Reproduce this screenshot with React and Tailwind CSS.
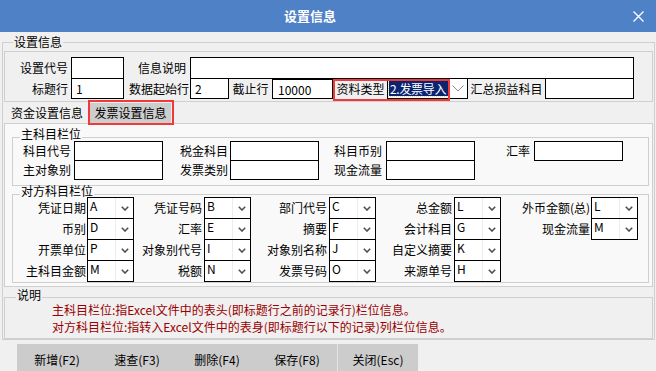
import React from "react";

const font = "font-['Noto_Sans_CJK_SC','Noto_Sans',sans-serif]";

function Chev() {
  return (
    <svg width="8" height="5" viewBox="0 0 8 5">
      <path d="M0.8 0.8 L4 4 L7.2 0.8" stroke="#505050" strokeWidth="1.6" fill="none" />
    </svg>
  );
}

function Combo({ v }) {
  return (
    <div className="flex h-[22px] w-[47px] border border-black bg-white">
      <div className="w-[27px] pl-[2px] text-[12px] leading-[16px]">{v}</div>
      <div className="flex flex-1 items-center justify-center border-l border-[#ececec]">
        <Chev />
      </div>
    </div>
  );
}

const dfRows = [
  [["凭证日期", "A"], ["凭证号码", "B"], ["部门代号", "C"], ["总金额", "L"], ["外币金额(总)", "L"]],
  [["币别", "D"], ["汇率", "E"], ["摘要", "F"], ["会计科目", "G"], ["现金流量", "M"]],
  [["开票单位", "P"], ["对象别代号", "I"], ["对象别名称", "J"], ["自定义摘要", "K"], null],
  [["主科目金额", "M"], ["税额", "N"], ["发票号码", "O"], ["来源单号", "H"], null],
];
const dfLabelCls = [
  "w-[74px] pr-[1px]",
  "w-[70px] pr-[2px]",
  "w-[78px] pr-[2px]",
  "w-[78px] pr-[2px]",
  "w-[90px] pr-[1px]",
];

function Box({ w, h = "h-[20px]", children, extra = "" }) {
  return (
    <div className={`${w} ${h} border border-black bg-white ${extra}`}>{children}</div>
  );
}

export default function App() {
  return (
    <div className={`h-[371px] w-[656px] overflow-hidden bg-[#f0f0f0] text-[12px] text-black ${font}`}>
      {/* title bar */}
      <div className="flex h-[32px] bg-[#4f81c7] text-white">
        <div className="flex flex-1 items-center justify-center text-[13px] font-bold">设置信息</div>
        <div className="flex w-[36px] items-center justify-center">
          <svg width="11" height="11" viewBox="0 0 11 11">
            <path d="M0.5 0.5L10.5 10.5M10.5 0.5L0.5 10.5" stroke="white" strokeWidth="1.3" />
          </svg>
        </div>
      </div>

      {/* outer group */}
      <fieldset className="ml-[2px] mt-[3px] w-[653px] border border-[#cfcfcf]">
        <legend className="ml-[10px] px-[1px] leading-[14px]">设置信息</legend>

        {/* fields box */}
        <div className="mx-[1px] mt-[2px] h-[51px] border border-[#cfcfcf] pt-[5px]">
          <div className="flex h-[22px] items-center">
            <div className="w-[66px] pr-[3px] text-right">设置代号</div>
            <Box w="w-[53px]" h="h-[22px]" />
            <div className="w-[66px] pr-[4px] text-right">信息说明</div>
            <Box w="w-[444px]" h="h-[22px]" />
          </div>
          <div className="-mt-px flex h-[21px] items-center">
            <div className="w-[66px] pr-[3px] text-right">标题行</div>
            <Box w="w-[53px]" h="h-[21px]" extra="pl-[4px] leading-[19px]">1</Box>
            <div className="w-[66px] pr-[1px] text-right">数据起始行</div>
            <Box w="w-[39px]" h="h-[21px]" extra="pl-[4px] leading-[19px]">2</Box>
            <div className="w-[43px] text-center">截止行</div>
            <Box w="w-[62px]" h="h-[21px]" extra="pl-[5px] leading-[19px] border-t-2 border-r-2">10000</Box>
            <div className="relative flex h-[21px] items-center">
              <div className="w-[53px] text-center">资料类型</div>
              <div className="flex h-[21px] w-[81px] border border-black bg-white">
                <div className="my-[2px] ml-[1px] flex w-[59px] items-center overflow-hidden whitespace-nowrap bg-[#0a2470] pl-[1px] tracking-[-0.3px] text-white outline-1 outline-dotted outline-[#e8d890]">
                  2.发票导入
                </div>
                <div className="flex flex-1 items-center justify-center">
                  <svg width="12" height="7" viewBox="0 0 12 7">
                    <path d="M0.5 0.5 L6 6 L11.5 0.5" stroke="#8a8a8a" strokeWidth="1" fill="none" />
                  </svg>
                </div>
              </div>
              <div className="pointer-events-none absolute left-[-1px] top-[1px] h-[22px] w-[117px] border-2 border-[#f03a3a]" />
            </div>
            <div className="w-[77px] text-center">汇总损益科目</div>
            <Box w="w-[89px]" h="h-[21px]" />
          </div>
        </div>

        {/* tabs */}
        <div className="flex h-[21px] items-end pl-[2px]">
          <div className="flex h-[21px] w-[84px] items-center justify-center">资金设置信息</div>
          <div className="relative ml-[1px] flex h-[20px] w-[81px] items-center justify-center bg-[#cdcdcd]">
            发票设置信息
            <div className="pointer-events-none absolute bottom-[-2px] left-[-2px] right-[-3px] top-[-3px] border-2 border-[#f03a3a]" />
          </div>
        </div>

        {/* tab page */}
        <div className="mx-[1px] h-[164px] border border-[#cfcfcf] bg-[#f9f9f9] pl-[7px] pr-[3px]">
          <fieldset className="mt-[8px] border border-[#cfcfcf] pb-[5px]">
            <legend className="ml-[7px] px-[1px] pb-[6px] leading-[4px]">主科目栏位</legend>
            <div className="-mt-px flex h-[20px] items-center">
              <div className="w-[61px] pr-[3px] text-right">科目代号</div>
              <Box w="w-[89px]" />
              <div className="w-[67px] pr-[2px] text-right">税金科目</div>
              <Box w="w-[89px]" />
              <div className="w-[67px] pr-[4px] text-right">科目币别</div>
              <Box w="w-[89px]" />
              <div className="w-[59px] pr-[4px] text-right">汇率</div>
              <Box w="w-[89px]" />
            </div>
            <div className="-mt-px flex h-[20px] items-center">
              <div className="w-[61px] pr-[3px] text-right">主对象别</div>
              <Box w="w-[89px]" />
              <div className="w-[67px] pr-[2px] text-right">发票类别</div>
              <Box w="w-[89px]" />
              <div className="w-[67px] pr-[4px] text-right">现金流量</div>
              <Box w="w-[89px]" />
            </div>
          </fieldset>

          <fieldset className="mt-[3px] border border-[#cfcfcf]">
            <legend className="ml-[7px] px-[1px] pb-[6px] leading-[4px]">对方科目栏位</legend>
            <div className="-mt-[2px]">
              {dfRows.map((row, ri) => (
                <div key={ri} className={`flex h-[22px] items-center ${ri > 0 ? "-mt-px" : ""}`}>
                  {row.map((c, ci) =>
                    c ? (
                      <React.Fragment key={ci}>
                        <div className={`${dfLabelCls[ci]} text-right`}>{c[0]}</div>
                        <Combo v={c[1]} />
                      </React.Fragment>
                    ) : null
                  )}
                </div>
              ))}
            </div>
          </fieldset>
        </div>

        {/* 说明 */}
        <fieldset className="mx-[1px] mt-[3px] border border-[#cfcfcf] pb-[3px]">
          <legend className="ml-[11px] px-[1px] pb-[4px] leading-[10px]">说明</legend>
          <div className="-mt-[3px] pl-[47px] leading-[17px] text-[#990000]">
            <div>主科目栏位:指Excel文件中的表头(即标题行之前的记录行)栏位信息。</div>
            <div>对方科目栏位:指转入Excel文件中的表身(即标题行以下的记录)列栏位信息。</div>
          </div>
        </fieldset>
      </fieldset>

      {/* buttons */}
      <div className="ml-[17px] mt-[4px] flex h-[32px] w-[401px] bg-[#cccccc]">
        <div className="flex w-[80px] items-center justify-center">新增(F2)</div>
        <div className="flex w-[80px] items-center justify-center">速查(F3)</div>
        <div className="flex w-[80px] items-center justify-center">删除(F4)</div>
        <div className="flex w-[80px] items-center justify-center">保存(F8)</div>
        <div className="w-px bg-[#e4e4e4]" />
        <div className="flex w-[80px] items-center justify-center">关闭(Esc)</div>
      </div>
    </div>
  );
}
